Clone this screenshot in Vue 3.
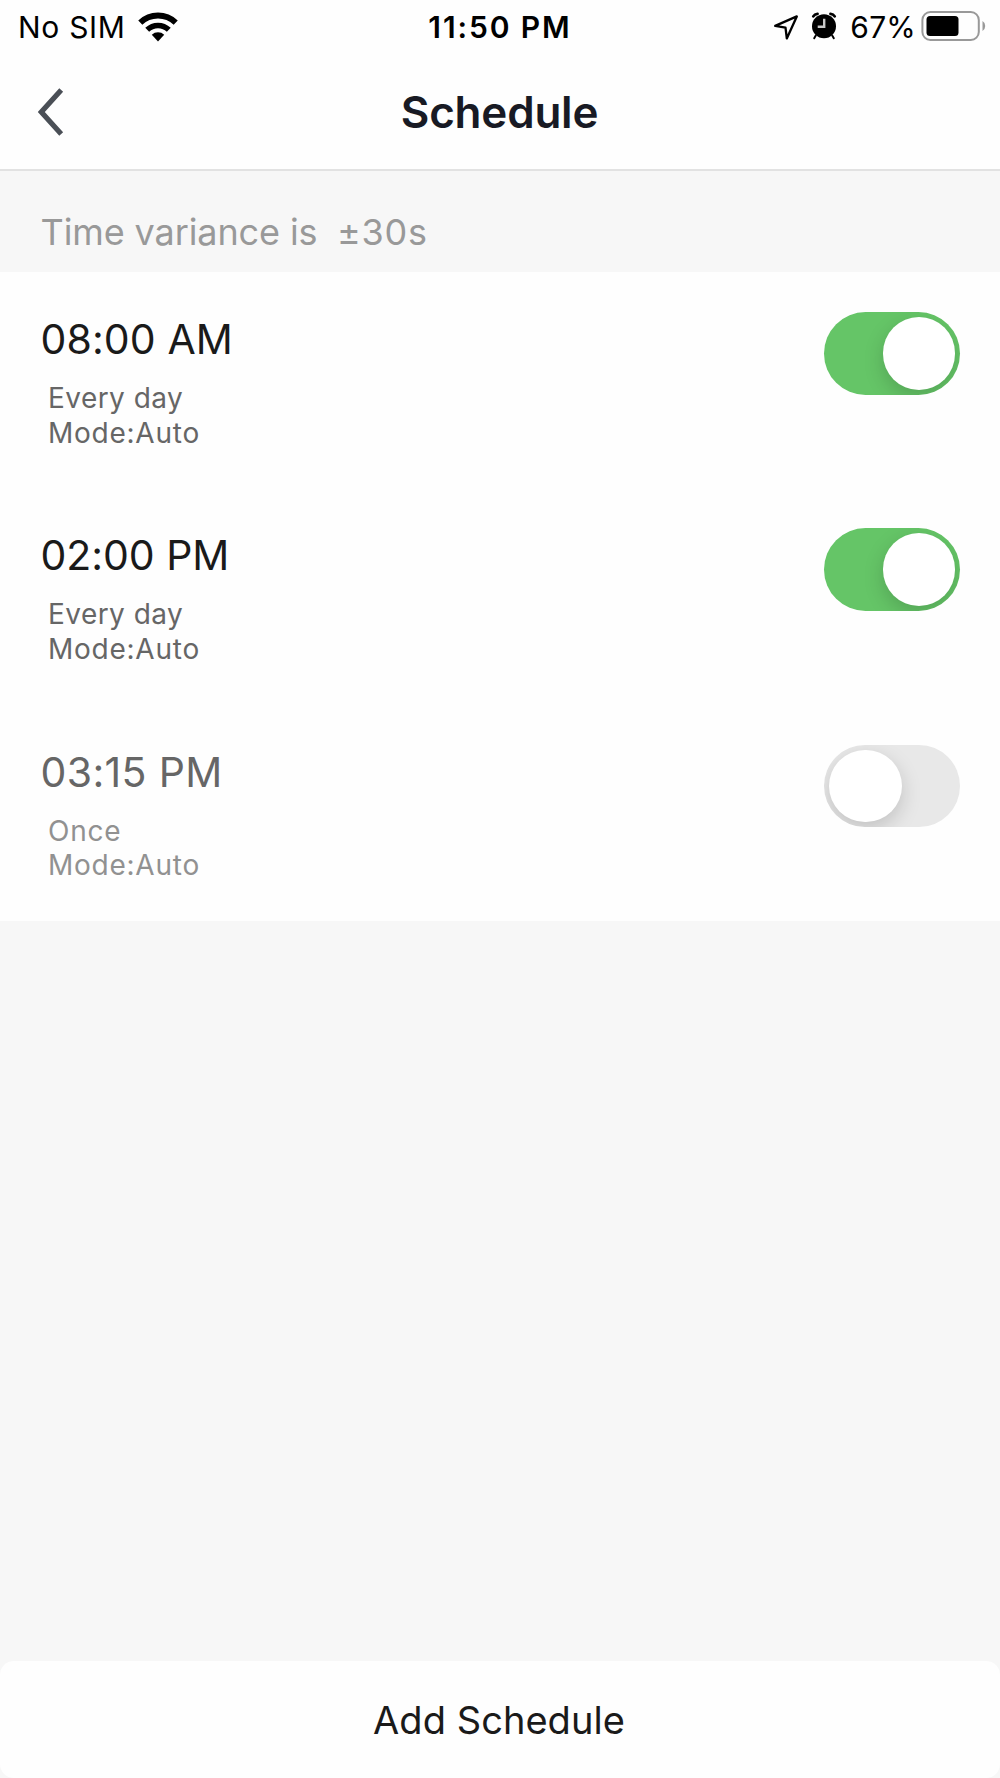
<script setup>
import { reactive } from 'vue'

const schedules = reactive([
  { id: 1, time: '08:00 AM', repeat: 'Every day', mode: 'Auto', on: true, spacing: '0.1px' },
  { id: 2, time: '02:00 PM', repeat: 'Every day', mode: 'Auto', on: true, spacing: '-0.05px' },
  { id: 3, time: '03:15 PM', repeat: 'Once', mode: 'Auto', on: false, spacing: '0.35px' }
])
</script>

<template>
  <div class="screen">
    <header class="status">
      <div class="status-left">
        <span class="carrier">No SIM</span>
        <svg class="wifi" width="42" height="32" viewBox="0 0 42 32">
          <g fill="none" stroke="#000">
            <path d="M3.3 11.7A25.5 25.5 0 0 1 38.7 11.7" stroke-width="5.9" />
            <path d="M10.2 18.8A15.6 15.6 0 0 1 31.8 18.8" stroke-width="5.6" />
          </g>
          <path d="M21 30.5L14.8 23.7A9.2 9.2 0 0 1 27.2 23.7Z" />
        </svg>
      </div>
      <span class="clock">11:50 PM</span>
      <div class="status-right">
        <svg class="location" width="28" height="28" viewBox="0 0 28 28">
          <path d="M24.8 3.4L14.8 25.4L13.5 14.6L3.2 12.9Z" fill="none" stroke="#000" stroke-width="2.3" stroke-linejoin="round" />
        </svg>
        <svg class="alarm" width="26" height="28" viewBox="0 0 26 28">
          <circle cx="13" cy="14.3" r="12" />
          <g fill="none" stroke="#000" stroke-linecap="round">
            <path d="M2.3 4.4Q3.6 2.2 6.5 1.9M19.5 1.9Q22.4 2.2 23.7 4.4" stroke-width="2.8" />
            <path d="M4.8 23.6L3.2 26.2M21.2 23.6L22.8 26.2" stroke-width="2" />
          </g>
          <path d="M13.2 6.8V14.8H6.7" fill="none" stroke="#c8c8c8" stroke-width="2.4" />
        </svg>
        <span class="percent">67%</span>
        <svg class="battery" width="66" height="32" viewBox="0 0 66 32">
          <rect x="2.4" y="2" width="56.4" height="28" rx="8" fill="none" stroke="#999" stroke-width="2" />
          <rect x="6.5" y="6" width="32" height="20" rx="3.5" />
          <path d="M62.5 11Q65.2 12.5 65.2 16T62.5 21Z" fill="#999" />
        </svg>
      </div>
    </header>

    <nav class="nav">
      <button class="back" aria-label="Back">
        <svg width="30" height="52" viewBox="0 0 30 52">
          <path d="M25.2 4.1L5.3 26L25.2 47.9" fill="none" stroke="#4a4f56" stroke-width="5.2" />
        </svg>
      </button>
      <h1>Schedule</h1>
    </nav>

    <p class="notice"><span>Time variance is</span><span class="amount">±30s</span></p>

    <ul class="list">
      <li v-for="item in schedules" :key="item.id" class="row" :class="{ off: !item.on }">
        <div>
          <div class="time" :style="{ letterSpacing: item.spacing }">{{ item.time }}</div>
          <div class="details">
            <div :class="item.repeat === 'Once' ? 'once' : 'repeat'">{{ item.repeat }}</div>
            <div class="mode">Mode:{{ item.mode }}</div>
          </div>
        </div>
        <button class="toggle" role="switch" :aria-checked="item.on" @click="item.on = !item.on">
          <span class="knob"></span>
        </button>
      </li>
    </ul>

    <button class="add">Add Schedule</button>
  </div>
</template>

<style>
body {
  background: #f7f7f7;
}
</style>

<style scoped>
.screen {
  display: flex;
  flex-direction: column;
  width: 1000px;
  height: 1778px;
  background: #f7f7f7;
  font-family: Inter, "Liberation Sans", sans-serif;
  overflow: hidden;
}
button {
  border: 0;
  padding: 0;
  font-family: inherit;
  cursor: pointer;
}
svg {
  display: block;
  flex: none;
}
.status {
  display: grid;
  grid-template-columns: 1fr auto 1fr;
  height: 55px;
  background: #fefefe;
  color: #000;
  font-size: 30px;
  line-height: 55px;
}
.status-left,
.status-right {
  display: flex;
  align-items: flex-start;
}
.status-left {
  padding-left: 18px;
}
.status-right {
  justify-content: flex-end;
  padding-right: 14px;
}
.carrier {
  letter-spacing: 0.7px;
}
.wifi {
  margin: 11px 0 0 11.3px;
}
.clock {
  font-weight: 600;
  letter-spacing: 1.9px;
}
.location {
  margin-top: 13px;
}
.alarm {
  margin: 12px 13px 0 11px;
}
.percent {
  letter-spacing: 0.2px;
}
.battery {
  margin: 10px 0 0 4px;
}
.nav {
  display: grid;
  grid-template-columns: 1fr auto 1fr;
  align-items: center;
  height: 114px;
  background: #fefefe;
  border-bottom: 2px solid #e2e2e2;
}
.back {
  width: 30px;
  margin-left: 36px;
  background: none;
}
h1 {
  margin: 0 1px 0 0;
  color: #181a24;
  font-size: 44px;
  font-weight: 600;
  line-height: 54px;
  letter-spacing: -0.2px;
}
.notice {
  box-sizing: border-box;
  height: 101px;
  margin: 0;
  padding: 39px 0 0 40.5px;
  color: #999;
  font-size: 36px;
  line-height: 44px;
  letter-spacing: -0.1px;
}
.amount {
  margin-left: 19.5px;
  letter-spacing: 0.74px;
}
.list {
  margin: 0;
  padding: 0;
  list-style: none;
  background: #fefefe;
}
.row {
  display: flex;
  justify-content: space-between;
  align-items: flex-start;
  box-sizing: border-box;
  height: 216.4px;
  padding: 40px 40px 0 40.5px;
}
.time {
  padding-top: 2px;
  color: #1a1a1a;
  font-size: 41px;
  line-height: 50px;
}
.details {
  margin: 17px 0 0 7.5px;
  color: #666;
  font-size: 28px;
  line-height: 34.5px;
}
.repeat {
  letter-spacing: 0.45px;
}
.mode {
  letter-spacing: 0.75px;
}
.once {
  letter-spacing: 0.8px;
}
.off .time {
  color: #666;
}
.off .details {
  color: #919191;
}
.toggle {
  display: flex;
  justify-content: flex-end;
  align-items: center;
  box-sizing: border-box;
  width: 136px;
  height: 82.5px;
  padding: 5px;
  border-radius: 42px;
  background: #65c567;
  overflow: hidden;
}
.knob {
  width: 72.5px;
  height: 72.5px;
  border-radius: 50%;
  background: #fff;
  box-shadow: 0 7px 20px rgba(0, 0, 0, 0.17);
}
.off .toggle {
  justify-content: flex-start;
  background: #e8e8e8;
}
.add {
  height: 117px;
  margin-top: auto;
  padding-right: 2px;
  border-radius: 14px;
  background: #fefefe;
  color: #1a1a1a;
  font-size: 38px;
  line-height: 119px;
  letter-spacing: 0.05px;
}
</style>
